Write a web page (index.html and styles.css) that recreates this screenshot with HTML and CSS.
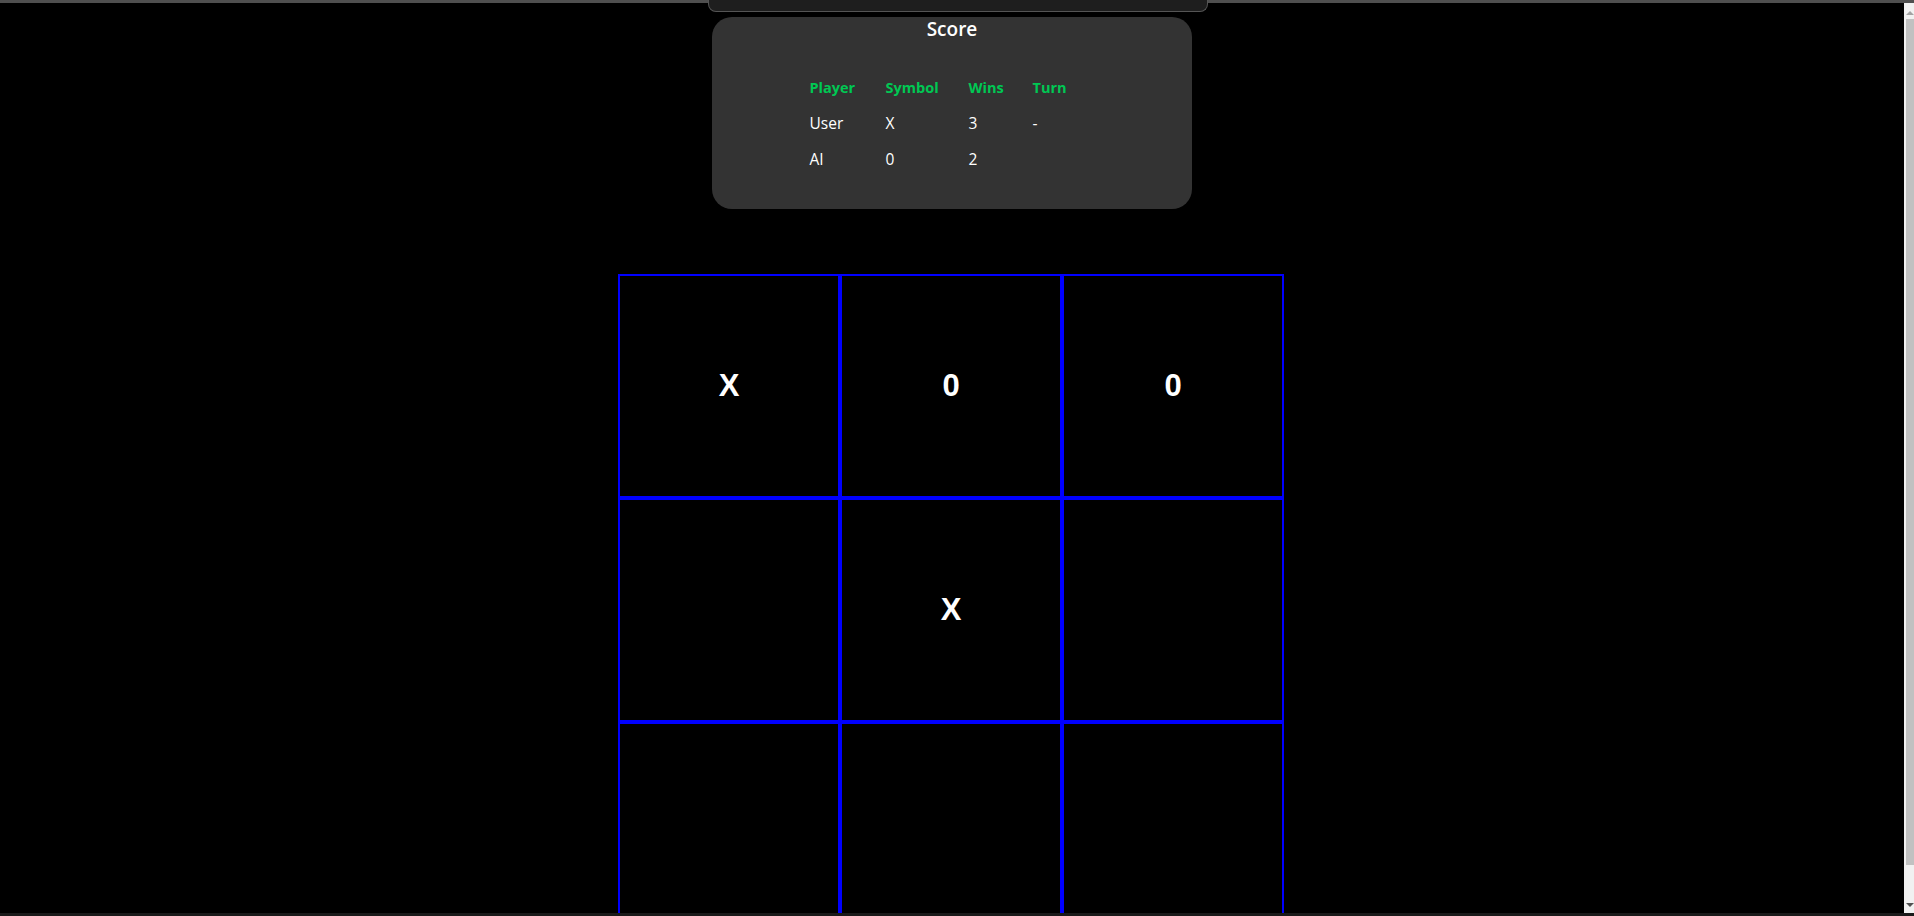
FILE: index.html
```html
<!DOCTYPE html>
<html lang="en">
<head>
<meta charset="utf-8">
<title>Tic Tac Toe</title>
<link rel="stylesheet" href="styles.css">
</head>
<body>
<div class="topbar"></div>
<div class="tab"></div>
<div class="main">
  <div class="page">
    <section class="score-card">
      <h2 class="score-title">Score</h2>
      <table class="score-table">
        <colgroup>
          <col class="c1"><col class="c2"><col class="c3"><col class="c4">
        </colgroup>
        <thead>
          <tr><th>Player</th><th>Symbol</th><th>Wins</th><th>Turn</th></tr>
        </thead>
        <tbody>
          <tr><td>User</td><td>X</td><td>3</td><td>-</td></tr>
          <tr><td>AI</td><td>0</td><td>2</td><td></td></tr>
        </tbody>
      </table>
    </section>
    <div class="board">
      <div class="cell">X</div>
      <div class="cell">0</div>
      <div class="cell">0</div>
      <div class="cell"></div>
      <div class="cell">X</div>
      <div class="cell"></div>
      <div class="cell"></div>
      <div class="cell"></div>
      <div class="cell"></div>
    </div>
  </div>
  <div class="scrollbar">
    <div class="sb-btn sb-up">
      <svg width="8" height="5" viewBox="0 0 8 5"><polygon points="0,5 4,1 8,5" fill="#a3a3a3"/></svg>
    </div>
    <div class="sb-thumb"></div>
    <div class="sb-btn sb-down">
      <svg width="8" height="5" viewBox="0 0 8 5"><polygon points="0,0 8,0 4,4" fill="#505050"/></svg>
    </div>
  </div>
</div>
<div class="bottombar"></div>
</body>
</html>
```

FILE: styles.css
```css
html, body {
  margin: 0;
  padding: 0;
}
body {
  width: 1914px;
  height: 916px;
  overflow: hidden;
  background: #000;
  display: flex;
  flex-direction: column;
  font-family: "Open Sans", "Noto Sans", sans-serif;
  color: #fff;
  position: relative;
}
.topbar {
  height: 3px;
  background: #4f4f4f;
  flex: none;
}
.tab {
  position: absolute;
  top: -1px;
  left: 708px;
  width: 498px;
  height: 12px;
  background: #1e1e1e;
  border: 1px solid #555;
  border-top: none;
  border-radius: 0 0 8px 8px;
}
.main {
  flex: 1;
  display: flex;
  min-height: 0;
}
.page {
  flex: 1;
  overflow: hidden;
  display: flex;
  flex-direction: column;
  align-items: center;
}
.score-card {
  flex: none;
  margin-top: 14px;
  width: 480px;
  height: 192px;
  box-sizing: border-box;
  background: #333;
  border-radius: 20px;
  display: flex;
  flex-direction: column;
  align-items: center;
}
.score-title {
  margin: 0;
  font-size: 19px;
  font-weight: 600;
  line-height: 25px;
}
.score-table {
  margin-top: 27px;
  border-collapse: collapse;
  table-layout: fixed;
  width: 285px;
}
.c1 { width: 76px; }
.c2 { width: 83px; }
.c3 { width: 64px; }
.c4 { width: 62px; }
.score-table th,
.score-table td {
  height: 36px;
  padding: 0;
  text-align: left;
  vertical-align: middle;
}
.score-table th {
  color: #00c853;
  font-size: 14.5px;
  font-weight: 700;
}
.score-table td {
  font-size: 15.5px;
  font-weight: 400;
}
.board {
  flex: none;
  margin-top: 65px;
  margin-right: 2px;
  display: grid;
  grid-template-columns: repeat(3, 222px);
  grid-auto-rows: 224px;
}
.cell {
  border: 2px solid #0000ff;
  display: flex;
  align-items: center;
  justify-content: center;
  font-family: "Liberation Sans", Arial, sans-serif;
  font-weight: 700;
  font-size: 31px;
  color: #fff;
}
.scrollbar {
  width: 10px;
  flex: none;
  background: #f1f1f1;
  display: flex;
  flex-direction: column;
}
.sb-btn {
  height: 16px;
  display: flex;
  justify-content: center;
  align-items: center;
  padding-left: 2px;
}
.sb-up {
  align-items: flex-start;
  padding-top: 7px;
  box-sizing: border-box;
}
.sb-thumb {
  height: 846px;
  margin-left: 2px;
  background: #c1c1c1;
}
.sb-down {
  margin-top: auto;
  align-items: flex-start;
  padding-top: 6px;
  box-sizing: border-box;
}
.bottombar {
  height: 3px;
  background: #1a1a1a;
  flex: none;
}
```
